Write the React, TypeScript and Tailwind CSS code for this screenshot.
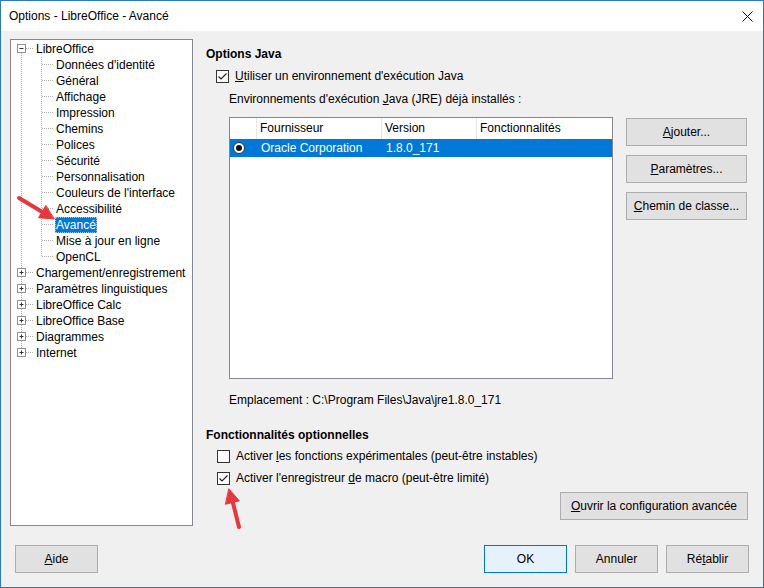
import React from 'react';

const childItems = [
  "Données d'identité",
  'Général',
  'Affichage',
  'Impression',
  'Chemins',
  'Polices',
  'Sécurité',
  'Personnalisation',
  "Couleurs de l'interface",
  'Accessibilité',
  'Avancé',
  'Mise à jour en ligne',
  'OpenCL',
];

const rootItems = [
  'Chargement/enregistrement',
  'Paramètres linguistiques',
  'LibreOffice Calc',
  'LibreOffice Base',
  'Diagrammes',
  'Internet',
];

const Checkbox = ({ checked }: { checked: boolean }) => (
  <div className="w-[13px] h-[13px] border border-[#333] bg-white flex items-center justify-center shrink-0">
    {checked && (
      <svg width="11" height="11" viewBox="0 0 11 11">
        <path d="M1.5 5.5 L4 8 L9.5 2.5" fill="none" stroke="#222" strokeWidth="1.2" />
      </svg>
    )}
  </div>
);

const Button = ({ children, className = '' }: { children: React.ReactNode; className?: string }) => (
  <button className={`h-[28px] bg-[#e1e1e1] border border-[#adadad] text-black flex items-center justify-center ${className}`}>
    {children}
  </button>
);

const Expander = ({ y, open }: { y: number; open: boolean }) => (
  <g>
    <rect x="6.5" y={y - 4.5} width="8" height="8" fill="white" stroke="#919191" />
    <line x1="8.5" y1={y - 0.5} x2="12.5" y2={y - 0.5} stroke="#333" />
    {!open && <line x1="10.5" y1={y - 2.5} x2="10.5" y2={y + 1.5} stroke="#333" />}
  </g>
);

const Tree = () => {
  const center = (i: number) => 9 + 16 * i;
  const rootRows = [0, 14, 15, 16, 17, 18, 19];
  return (
    <div className="relative w-[183px] h-[487px] border border-[#828790] bg-white shrink-0">
      <svg className="absolute left-0 top-0 pointer-events-none" width="181" height="485">
        <g stroke="#b0b0b0" strokeDasharray="1 1">
          <line x1="10.5" y1="9" x2="10.5" y2={center(19)} />
          {rootRows.map((r) => (
            <line key={r} x1="15" y1={center(r) - 0.5} x2="23" y2={center(r) - 0.5} />
          ))}
          <line x1="30.5" y1="17" x2="30.5" y2={center(13)} />
          {childItems.map((_, i) => (
            <line key={i} x1="31" y1={center(i + 1) - 0.5} x2="43" y2={center(i + 1) - 0.5} />
          ))}
        </g>
        <Expander y={center(0)} open />
        {rootRows.slice(1).map((r) => (
          <Expander key={r} y={center(r)} open={false} />
        ))}
      </svg>
      <div className="relative flex flex-col pt-[1px]">
        <div className="h-4 leading-4 pl-[25px]">LibreOffice</div>
        {childItems.map((c) => (
          <div key={c} className="h-4 leading-4 pl-[44px]">
            {c === 'Avancé' ? (
              <span className="bg-[#0078d7] text-white px-[1px] outline-1 outline-dotted outline-[#99c9ef] -outline-offset-1 inline-block h-4">
                {c}
              </span>
            ) : (
              <span className="px-[1px]">{c}</span>
            )}
          </div>
        ))}
        {rootItems.map((r) => (
          <div key={r} className="h-4 leading-4 pl-[25px]">
            {r}
          </div>
        ))}
      </div>
    </div>
  );
};

const JreTable = () => (
  <div className="w-[384px] h-[262px] border border-[#828790] bg-white shrink-0">
    <div className="flex h-[21px] leading-[21px]">
      <div className="w-[27px] border-r border-[#e5e5e5]" />
      <div className="w-[125px] border-r border-[#e5e5e5] pl-[3px]">Fournisseur</div>
      <div className="w-[95px] border-r border-[#e5e5e5] pl-[3px]">Version</div>
      <div className="flex-1 pl-[3px]">Fonctionnalités</div>
    </div>
    <div className="flex h-[18px] leading-[18px] bg-[#0078d7] text-white">
      <div className="w-[27px] flex items-center pl-[3px]">
        <div className="w-[12px] h-[12px] rounded-full bg-white border border-[#333] flex items-center justify-center">
          <div className="w-[6px] h-[6px] rounded-full bg-[#111]" />
        </div>
      </div>
      <div className="w-[126px] pl-[4px]">Oracle Corporation</div>
      <div className="w-[95px] pl-[3px]">1.8.0_171</div>
    </div>
  </div>
);

export default function App() {
  return (
    <div className="relative w-[764px] h-[588px] border border-[#2b79c2] bg-[#f0f0f0] flex flex-col text-[12px] text-black font-['Segoe_UI','Liberation_Sans',sans-serif] overflow-hidden">
      {/* title bar */}
      <div className="h-[30px] bg-white flex items-center justify-between pl-[8px] pr-[10px] shrink-0">
        <span>Options - LibreOffice - Avancé</span>
        <svg width="11" height="11" viewBox="0 0 11 11">
          <path d="M0.5 0.5 L10.5 10.5 M10.5 0.5 L0.5 10.5" stroke="#111" strokeWidth="1" />
        </svg>
      </div>

      {/* content */}
      <div className="flex pl-[9px] pt-[8px] pr-[15px]">
        <Tree />
        <div className="flex-1 ml-[13px] flex flex-col">
          <div className="mt-[7px] h-4 leading-4 font-bold">Options Java</div>
          <div className="mt-[6px] h-4 flex items-center gap-[6px] pl-[10px]">
            <Checkbox checked />
            <span className="leading-4">
              <span className="underline">U</span>tiliser un environnement d'exécution Java
            </span>
          </div>
          <div className="mt-[7px] h-4 leading-4 pl-[23px]">
            Environnements d'exécution <span className="underline">J</span>ava (JRE) déjà installés :
          </div>
          <div className="mt-[10px] flex pl-[23px] gap-[13px]">
            <JreTable />
            <div className="flex flex-col gap-[9px] pt-[1px] w-[121px]">
              <Button className="w-full">
                <span>
                  <span className="underline">A</span>jouter...
                </span>
              </Button>
              <Button className="w-full">
                <span>
                  <span className="underline">P</span>aramètres...
                </span>
              </Button>
              <Button className="w-full">
                <span>
                  <span className="underline">C</span>hemin de classe...
                </span>
              </Button>
            </div>
          </div>
          <div className="mt-[13px] h-4 leading-4 pl-[23px]">Emplacement : C:\Program Files\Java\jre1.8.0_171</div>
          <div className="mt-[19px] h-4 leading-4 font-bold">Fonctionnalités optionnelles</div>
          <div className="mt-[5px] h-4 flex items-center gap-[6px] pl-[11px]">
            <Checkbox checked={false} />
            <span className="leading-4">
              Activer <span className="underline">l</span>es fonctions expérimentales (peut-être instables)
            </span>
          </div>
          <div className="mt-[6px] h-4 flex items-center gap-[6px] pl-[11px]">
            <Checkbox checked />
            <span className="leading-4">
              Activer l'enregistreur <span className="underline">d</span>e macro (peut-être limité)
            </span>
          </div>
          <div className="mt-[6px] flex justify-end">
            <Button className="w-[188px]">
              <span>
                <span className="underline">O</span>uvrir la configuration avancée
              </span>
            </Button>
          </div>
        </div>
      </div>

      {/* bottom buttons */}
      <div className="mt-[19px] flex items-center pl-[14px] pr-[14px]">
        <Button className="w-[83px]">
          <span>
            <span className="underline">A</span>ide
          </span>
        </Button>
        <div className="flex-1" />
        <div className="flex gap-[8px]">
          <button className="w-[83px] h-[28px] bg-[#e5f1fb] border border-[#0078d7] flex items-center justify-center">OK</button>
          <Button className="w-[83px]">Annuler</Button>
          <Button className="w-[83px]">
            <span>
              Ré<span className="underline">t</span>ablir
            </span>
          </Button>
        </div>
      </div>

      {/* annotation arrows */}
      <svg className="absolute left-[-1px] top-[-1px] pointer-events-none" width="764" height="588">
        <g fill="#e8373c" stroke="#e8373c" strokeLinecap="round">
          <line x1="19" y1="198" x2="44" y2="213" strokeWidth="4" />
          <polygon points="54,219 38.5,217.7 45.7,205.7" strokeWidth="1" strokeLinejoin="round" />
          <line x1="239" y1="527" x2="233" y2="503" strokeWidth="4" />
          <polygon points="229,489 239.3,500.8 225.7,504.2" strokeWidth="1" strokeLinejoin="round" />
        </g>
      </svg>
    </div>
  );
}
